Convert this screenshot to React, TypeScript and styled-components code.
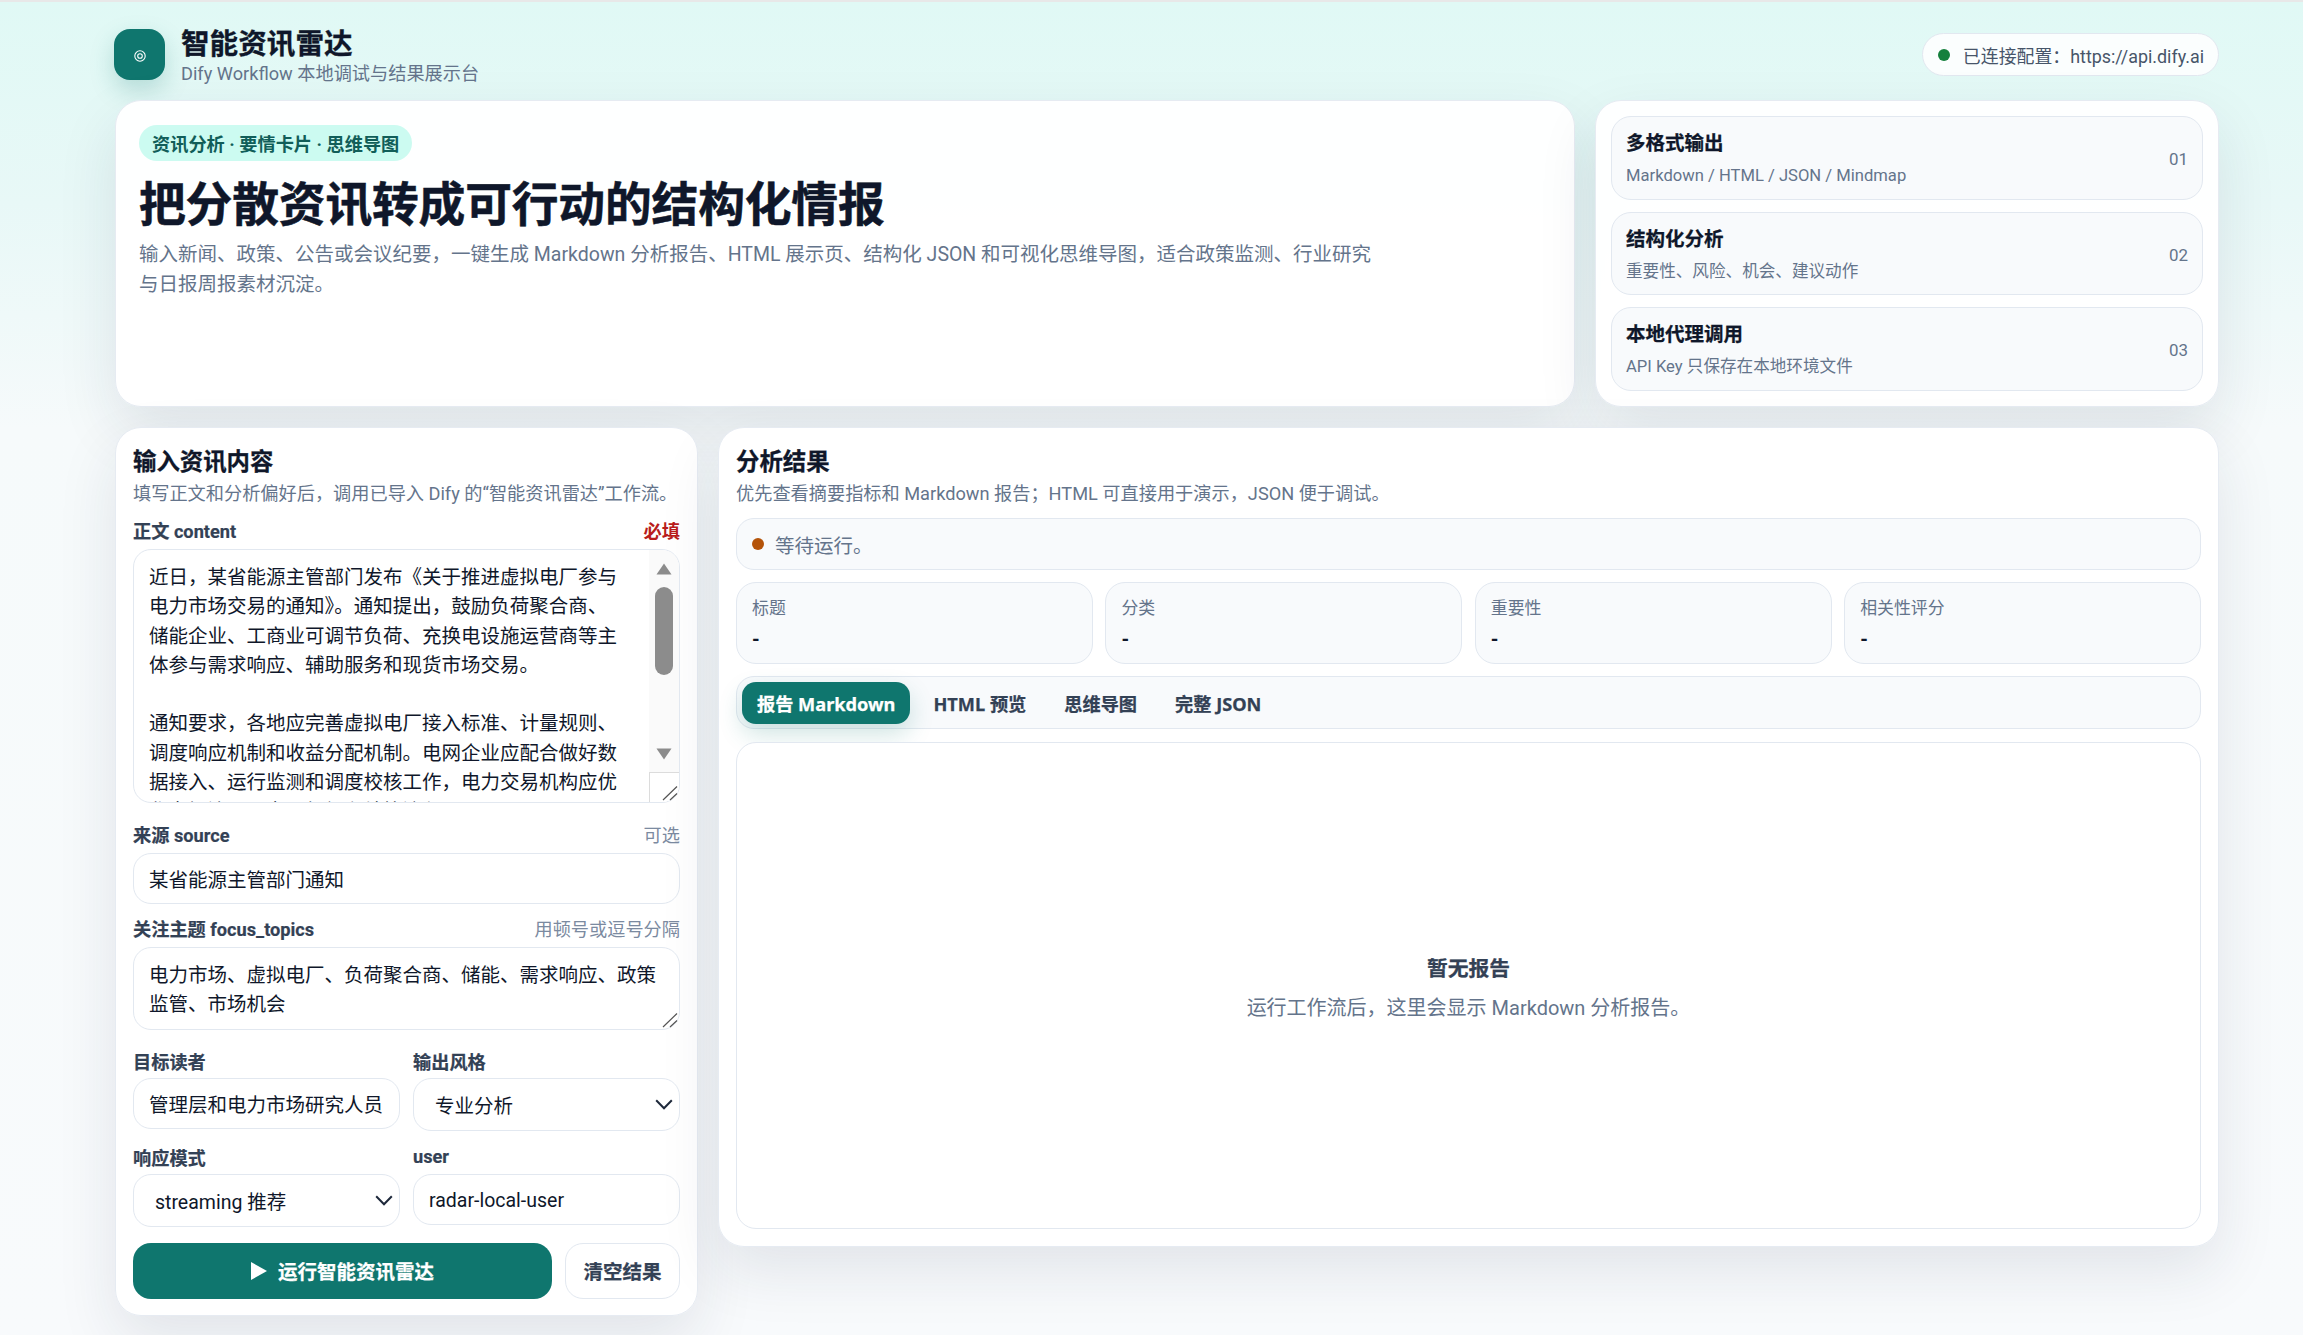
import React from "react";
import styled, { createGlobalStyle } from "styled-components";

const FONT = 'Roboto, "Noto Sans CJK SC", sans-serif';

const GlobalStyle = createGlobalStyle`
  * { box-sizing: border-box; }
  html, body { margin: 0; padding: 0; }
  body {
    font-family: ${FONT};
    color: #0f172a;
    background: #f8fafc;
  }
`;

const Page = styled.div`
  min-height: 1335px;
  border-top: 2px solid #e8e8e8;
  padding: 27px 84px 19px 115px;
  background: linear-gradient(180deg, #e0f9f5 0%, #e8f8f7 15%, #f6fafb 32%, #f8fafc 100%);
  display: flex;
  flex-direction: column;
`;

const Header = styled.header`
  display: flex;
  align-items: flex-start;
  justify-content: space-between;
  height: 71px;
`;

const Brand = styled.div`
  display: flex;
  gap: 16px;
  margin-left: -1px;
`;

const BrandIcon = styled.div`
  width: 51px;
  height: 51px;
  padding-top: 2px;
  border-radius: 16px;
  background: #0f766e;
  display: flex;
  align-items: center;
  justify-content: center;
  box-shadow: 0 10px 24px rgba(15, 118, 110, 0.22);
`;

const BrandTitle = styled.h1`
  margin: -1px 0 0;
  font-size: 28.6px;
  line-height: 32px;
  font-weight: 700;
  -webkit-text-stroke: 0.3px #0f172a;
`;

const BrandSub = styled.div`
  margin-top: 2px;
  font-size: 18.2px;
  line-height: 24px;
  color: #64748b;
`;

const ConnPill = styled.div`
  margin-top: 4px;
  height: 43px;
  padding: 0 14px 0 15px;
  border: 1px solid #e2e8f0;
  border-radius: 22px;
  background: rgba(255, 255, 255, 0.86);
  display: flex;
  align-items: center;
  gap: 13px;
  font-size: 17.9px;
  color: #475569;
`;

const Dot = styled.span<{ $color: string }>`
  width: 12px;
  height: 12px;
  flex: none;
  border-radius: 50%;
  background: ${(p) => p.$color};
`;

const Panel = styled.section`
  background: rgba(255, 255, 255, 0.96);
  border: 1px solid #e6ebf2;
  border-radius: 26px;
  box-shadow: 0 24px 60px rgba(30, 41, 70, 0.1);
`;

const HeroGrid = styled.div`
  display: grid;
  grid-template-columns: 1460px 1fr;
  gap: 20px;
  height: 307px;
`;

const HeroMain = styled(Panel)`
  padding: 24px 23px;
`;

const Eyebrow = styled.div`
  display: inline-flex;
  align-items: center;
  height: 36px;
  padding: 0 13px;
  border-radius: 18px;
  background: #ccfbf1;
  color: #115e59;
  font-size: 18.2px;
  font-weight: 700;
`;

const HeroTitle = styled.h2`
  margin: 16px 0 0;
  font-size: 46.8px;
  line-height: 56px;
  font-weight: 700;
  letter-spacing: -0.2px;
  -webkit-text-stroke: 0.5px #0f172a;
`;

const HeroText = styled.p`
  margin: 7px 0 0;
  max-width: 1240px;
  font-size: 19.5px;
  line-height: 30px;
  color: #64748b;
`;

const HeroSide = styled(Panel)`
  padding: 15px;
  display: flex;
  flex-direction: column;
  gap: 12px;
`;

const FeatureCard = styled.div`
  flex: 1;
  padding: 2px 14px 0;
  background: #f8fafc;
  border: 1px solid #e2e8f0;
  border-radius: 20px;
  display: flex;
  align-items: center;
  justify-content: space-between;
`;

const FeatureName = styled.div`
  font-size: 19.5px;
  line-height: 28px;
  font-weight: 700;
  -webkit-text-stroke: 0.25px #0f172a;
`;

const FeatureSub = styled.div`
  margin-top: 6px;
  font-size: 16.6px;
  line-height: 24px;
  color: #64748b;
`;

const FeatureNum = styled.div`
  font-size: 16.9px;
  color: #64748b;
`;

const MainGrid = styled.div`
  margin-top: 20px;
  display: grid;
  grid-template-columns: 583px 1fr;
  gap: 20px;
  align-items: start;
`;

const InputPanel = styled(Panel)`
  height: 889px;
  padding: 17px;
`;

const ResultPanel = styled(Panel)`
  height: 820px;
  padding: 17px;
  display: flex;
  flex-direction: column;
`;

const PanelTitle = styled.h3`
  margin: 1px 0 0;
  font-size: 23.4px;
  line-height: 32px;
  font-weight: 700;
  -webkit-text-stroke: 0.3px #0f172a;
`;

const PanelSub = styled.p`
  margin: 4px 0 0;
  font-size: 18.2px;
  line-height: 24px;
  color: #64748b;
`;

const LabelRow = styled.div<{ $top?: number; $gap?: number }>`
  display: flex;
  justify-content: space-between;
  align-items: center;
  height: 24px;
  margin-top: ${(p) => p.$top ?? 0}px;
  margin-bottom: ${(p) => p.$gap ?? 5}px;
  font-size: 18.2px;
  font-weight: 700;
  color: #334155;
  -webkit-text-stroke: 0.2px #334155;
`;

const Hint = styled.span<{ $required?: boolean }>`
  font-weight: ${(p) => (p.$required ? 700 : 400)};
  color: ${(p) => (p.$required ? "#b91c1c" : "#7b8aa0")};
  -webkit-text-stroke: 0;
`;

const fieldStyle = `
  width: 100%;
  display: block;
  border: 1px solid #e2e8f0;
  border-radius: 18px;
  background: #fff;
  color: #0f172a;
  font-family: ${FONT};
  font-size: 19.5px;
  outline: none;
`;

const Input = styled.input<{ $latin?: boolean }>`
  ${fieldStyle}
  height: 51px;
  padding: ${(p) => (p.$latin ? 3 : 1)}px 15px 0;
`;

const Area = styled.textarea<{ $height: number; $scrollbar?: boolean }>`
  ${fieldStyle}
  height: ${(p) => p.$height}px;
  padding: 13.5px ${(p) => (p.$scrollbar ? 56 : 15)}px 0 15px;
  line-height: 29.3px;
  resize: none;
  overflow: hidden;
`;

const AreaWrap = styled.div`
  position: relative;
`;

const ResizeGrip = styled.svg`
  position: absolute;
  right: 1px;
  bottom: 1px;
  width: 30px;
  height: 30px;
  pointer-events: none;
`;

const ScrollRail = styled.div`
  position: absolute;
  top: 1px;
  right: 1px;
  bottom: 1px;
  width: 30px;
  overflow: hidden;
  border-radius: 0 17px 17px 0;
  background: #fafafa;
  display: flex;
  flex-direction: column;
  align-items: center;
  padding-top: 13px;
`;

const ScrollThumb = styled.div`
  width: 18px;
  height: 88px;
  flex: none;
  margin: 12px 0 auto;
  border-radius: 9px;
  background: #8c8c8c;
`;

const ScrollCorner = styled.div`
  width: 30px;
  height: 30px;
  flex: none;
  margin-top: 12px;
  background: #fff;
  border-top: 1px solid #dcdcdc;
  border-left: 1px solid #dcdcdc;
`;

const TwoCols = styled.div`
  display: grid;
  grid-template-columns: 267px 1fr;
  column-gap: 13px;
`;

const SelectWrap = styled.div`
  position: relative;

  svg {
    position: absolute;
    right: 7px;
    top: 21px;
  }
`;

const Select = styled.select`
  ${fieldStyle}
  height: 53px;
  padding: 4px 21px 0;
  appearance: none;
`;

const Actions = styled.div`
  margin-top: 16px;
  display: grid;
  grid-template-columns: 419px 1fr;
  gap: 13px;
`;

const RunButton = styled.button`
  height: 56px;
  border: 0;
  border-radius: 18px;
  background: #0f766e;
  color: #fff;
  font-family: ${FONT};
  font-size: 19.5px;
  font-weight: 700;
  -webkit-text-stroke: 0.25px #fff;
  display: flex;
  align-items: center;
  justify-content: center;
  gap: 11px;
`;

const ClearButton = styled.button`
  height: 56px;
  border: 1px solid #e2e8f0;
  border-radius: 18px;
  background: #fff;
  color: #334155;
  font-family: ${FONT};
  font-size: 19.5px;
  font-weight: 700;
  -webkit-text-stroke: 0.25px #334155;
`;

const StatusBar = styled.div`
  margin-top: 12px;
  height: 52px;
  padding: 0 15px;
  border: 1px solid #e2e8f0;
  border-radius: 18px;
  background: #f8fafc;
  display: flex;
  align-items: center;
  gap: 11px;
  font-size: 19.5px;
  color: #64748b;
`;

const Metrics = styled.div`
  margin-top: 12px;
  display: grid;
  grid-template-columns: repeat(4, 1fr);
  gap: 12.5px;
`;

const Metric = styled.div`
  height: 82px;
  padding: 13px 15px;
  border: 1px solid #e2e8f0;
  border-radius: 20px;
  background: #f8fafc;
`;

const MetricLabel = styled.div`
  font-size: 16.9px;
  line-height: 24px;
  color: #64748b;
`;

const MetricValue = styled.div`
  margin-top: 7px;
  font-size: 19.5px;
  line-height: 26px;
  font-weight: 700;
`;

const Tabs = styled.div`
  margin-top: 12px;
  height: 53px;
  padding: 0 5px;
  border: 1px solid #e2e8f0;
  border-radius: 18px;
  background: #f8fafc;
  display: flex;
  align-items: center;
  gap: 8px;
`;

const Tab = styled.button<{ $active?: boolean }>`
  height: 42px;
  padding: 0 15px;
  border: 0;
  border-radius: 14px;
  background: ${(p) => (p.$active ? "#0f766e" : "transparent")};
  color: ${(p) => (p.$active ? "#fff" : "#334155")};
  box-shadow: ${(p) => (p.$active ? "0 10px 24px rgba(15, 118, 110, 0.2)" : "none")};
  font-family: "Noto Sans", "Noto Sans CJK SC", sans-serif;
  font-size: 18.2px;
  font-weight: 700;
  -webkit-text-stroke: 0.25px currentColor;
`;

const ReportBox = styled.div`
  margin-top: 13px;
  flex: 1;
  border: 1px solid #e2e8f0;
  border-radius: 20px;
  background: #fff;
  display: flex;
  flex-direction: column;
  align-items: center;
  justify-content: center;
  padding-top: 5px;
`;

const EmptyTitle = styled.div`
  font-size: 20.8px;
  line-height: 28px;
  font-weight: 700;
  color: #334155;
  -webkit-text-stroke: 0.25px #334155;
`;

const EmptyText = styled.div`
  margin-top: 11px;
  font-size: 20px;
  line-height: 28px;
  color: #64748b;
`;

const features = [
  { name: "多格式输出", sub: "Markdown / HTML / JSON / Mindmap", num: "01" },
  { name: "结构化分析", sub: "重要性、风险、机会、建议动作", num: "02" },
  { name: "本地代理调用", sub: "API Key 只保存在本地环境文件", num: "03" },
];

const metrics = ["标题", "分类", "重要性", "相关性评分"];
const tabs = ["报告 Markdown", "HTML 预览", "思维导图", "完整 JSON"];

const connText = "已连接配置\uFF1Ahttps://api.dify.ai";
const heroText =
  "输入新闻、政策、公告或会议纪要\uFF0C一键生成 Markdown 分析报告、HTML 展示页、结构化 JSON 和可视化思维导图\uFF0C适合政策监测、行业研究与日报周报素材沉淀。";
const inputSub = "填写正文和分析偏好后\uFF0C调用已导入 Dify 的“智能资讯雷达”工作流。";
const resultSub = "优先查看摘要指标和 Markdown 报告\uFF1BHTML 可直接用于演示\uFF0CJSON 便于调试。";
const emptyText = "运行工作流后\uFF0C这里会显示 Markdown 分析报告。";

const contentText =
  "近日\uFF0C某省能源主管部门发布《关于推进虚拟电厂参与电力市场交易的通知》。通知提出\uFF0C鼓励负荷聚合商、储能企业、工商业可调节负荷、充换电设施运营商等主体参与需求响应、辅助服务和现货市场交易。\n\n" +
  "通知要求\uFF0C各地应完善虚拟电厂接入标准、计量规则、调度响应机制和收益分配机制。电网企业应配合做好数据接入、运行监测和调度校核工作\uFF0C电力交易机构应优化市场注册、交易组织和结算流程。";

function Grip() {
  return (
    <ResizeGrip viewBox="0 0 30 30">
      <path d="M14 28L28 14.5M21 28L28 21.5" stroke="#555" strokeWidth="1.2" fill="none" />
    </ResizeGrip>
  );
}

function Chevron() {
  return (
    <svg width="18" height="11" viewBox="0 0 18 11">
      <path d="M1.2 1.2L9 9.2L16.8 1.2" stroke="#1e293b" strokeWidth="2" fill="none" />
    </svg>
  );
}

export default function App() {
  return (
    <Page>
      <GlobalStyle />
      <Header>
        <Brand>
          <BrandIcon>
            <svg width="12" height="12" viewBox="0 0 12 12">
              <circle cx="6" cy="6" r="5.2" stroke="#fff" strokeWidth="1.1" fill="none" />
              <circle cx="6" cy="6" r="2.3" stroke="#fff" strokeWidth="1.1" fill="none" />
            </svg>
          </BrandIcon>
          <div>
            <BrandTitle>智能资讯雷达</BrandTitle>
            <BrandSub>Dify Workflow 本地调试与结果展示台</BrandSub>
          </div>
        </Brand>
        <ConnPill>
          <Dot $color="#15803d" />
          {connText}
        </ConnPill>
      </Header>

      <HeroGrid>
        <HeroMain>
          <Eyebrow>资讯分析 · 要情卡片 · 思维导图</Eyebrow>
          <HeroTitle>把分散资讯转成可行动的结构化情报</HeroTitle>
          <HeroText>{heroText}</HeroText>
        </HeroMain>
        <HeroSide>
          {features.map((f) => (
            <FeatureCard key={f.num}>
              <div>
                <FeatureName>{f.name}</FeatureName>
                <FeatureSub>{f.sub}</FeatureSub>
              </div>
              <FeatureNum>{f.num}</FeatureNum>
            </FeatureCard>
          ))}
        </HeroSide>
      </HeroGrid>

      <MainGrid>
        <InputPanel>
          <PanelTitle>输入资讯内容</PanelTitle>
          <PanelSub>{inputSub}</PanelSub>

          <LabelRow $top={11.5} $gap={7}>
            正文 content <Hint $required>必填</Hint>
          </LabelRow>
          <AreaWrap>
            <Area $height={254} $scrollbar defaultValue={contentText} />
            <ScrollRail>
              <svg width="16" height="12" viewBox="0 0 16 12">
                <path d="M8 0.5L15.5 11.5H0.5Z" fill="#8c8c8c" />
              </svg>
              <ScrollThumb />
              <svg width="16" height="12" viewBox="0 0 16 12">
                <path d="M0.5 0.5H15.5L8 11.5Z" fill="#8c8c8c" />
              </svg>
              <ScrollCorner />
            </ScrollRail>
            <Grip />
          </AreaWrap>

          <LabelRow $top={19} $gap={7}>
            来源 source <Hint>可选</Hint>
          </LabelRow>
          <Input defaultValue="某省能源主管部门通知" />

          <LabelRow $top={12} $gap={7}>
            关注主题 focus_topics <Hint>用顿号或逗号分隔</Hint>
          </LabelRow>
          <AreaWrap>
            <Area $height={83} defaultValue="电力市场、虚拟电厂、负荷聚合商、储能、需求响应、政策监管、市场机会" />
            <Grip />
          </AreaWrap>

          <TwoCols>
            <div>
              <LabelRow $top={19}>目标读者</LabelRow>
              <Input defaultValue="管理层和电力市场研究人员" />
            </div>
            <div>
              <LabelRow $top={19}>输出风格</LabelRow>
              <SelectWrap>
                <Select defaultValue="专业分析">
                  <option>专业分析</option>
                </Select>
                <Chevron />
              </SelectWrap>
            </div>
            <div>
              <LabelRow $top={14}>响应模式</LabelRow>
              <SelectWrap>
                <Select defaultValue="streaming 推荐">
                  <option>streaming 推荐</option>
                </Select>
                <Chevron />
              </SelectWrap>
            </div>
            <div>
              <LabelRow $top={14}>user</LabelRow>
              <Input $latin defaultValue="radar-local-user" />
            </div>
          </TwoCols>

          <Actions>
            <RunButton>
              <svg width="16" height="18" viewBox="0 0 16 18">
                <path d="M0 0L16 9L0 18Z" fill="#fff" />
              </svg>
              运行智能资讯雷达
            </RunButton>
            <ClearButton>清空结果</ClearButton>
          </Actions>
        </InputPanel>

        <ResultPanel>
          <PanelTitle>分析结果</PanelTitle>
          <PanelSub>{resultSub}</PanelSub>
          <StatusBar>
            <Dot $color="#b45309" />
            等待运行。
          </StatusBar>
          <Metrics>
            {metrics.map((m) => (
              <Metric key={m}>
                <MetricLabel>{m}</MetricLabel>
                <MetricValue>-</MetricValue>
              </Metric>
            ))}
          </Metrics>
          <Tabs>
            {tabs.map((t, i) => (
              <Tab key={t} $active={i === 0}>
                {t}
              </Tab>
            ))}
          </Tabs>
          <ReportBox>
            <EmptyTitle>暂无报告</EmptyTitle>
            <EmptyText>{emptyText}</EmptyText>
          </ReportBox>
        </ResultPanel>
      </MainGrid>
    </Page>
  );
}
